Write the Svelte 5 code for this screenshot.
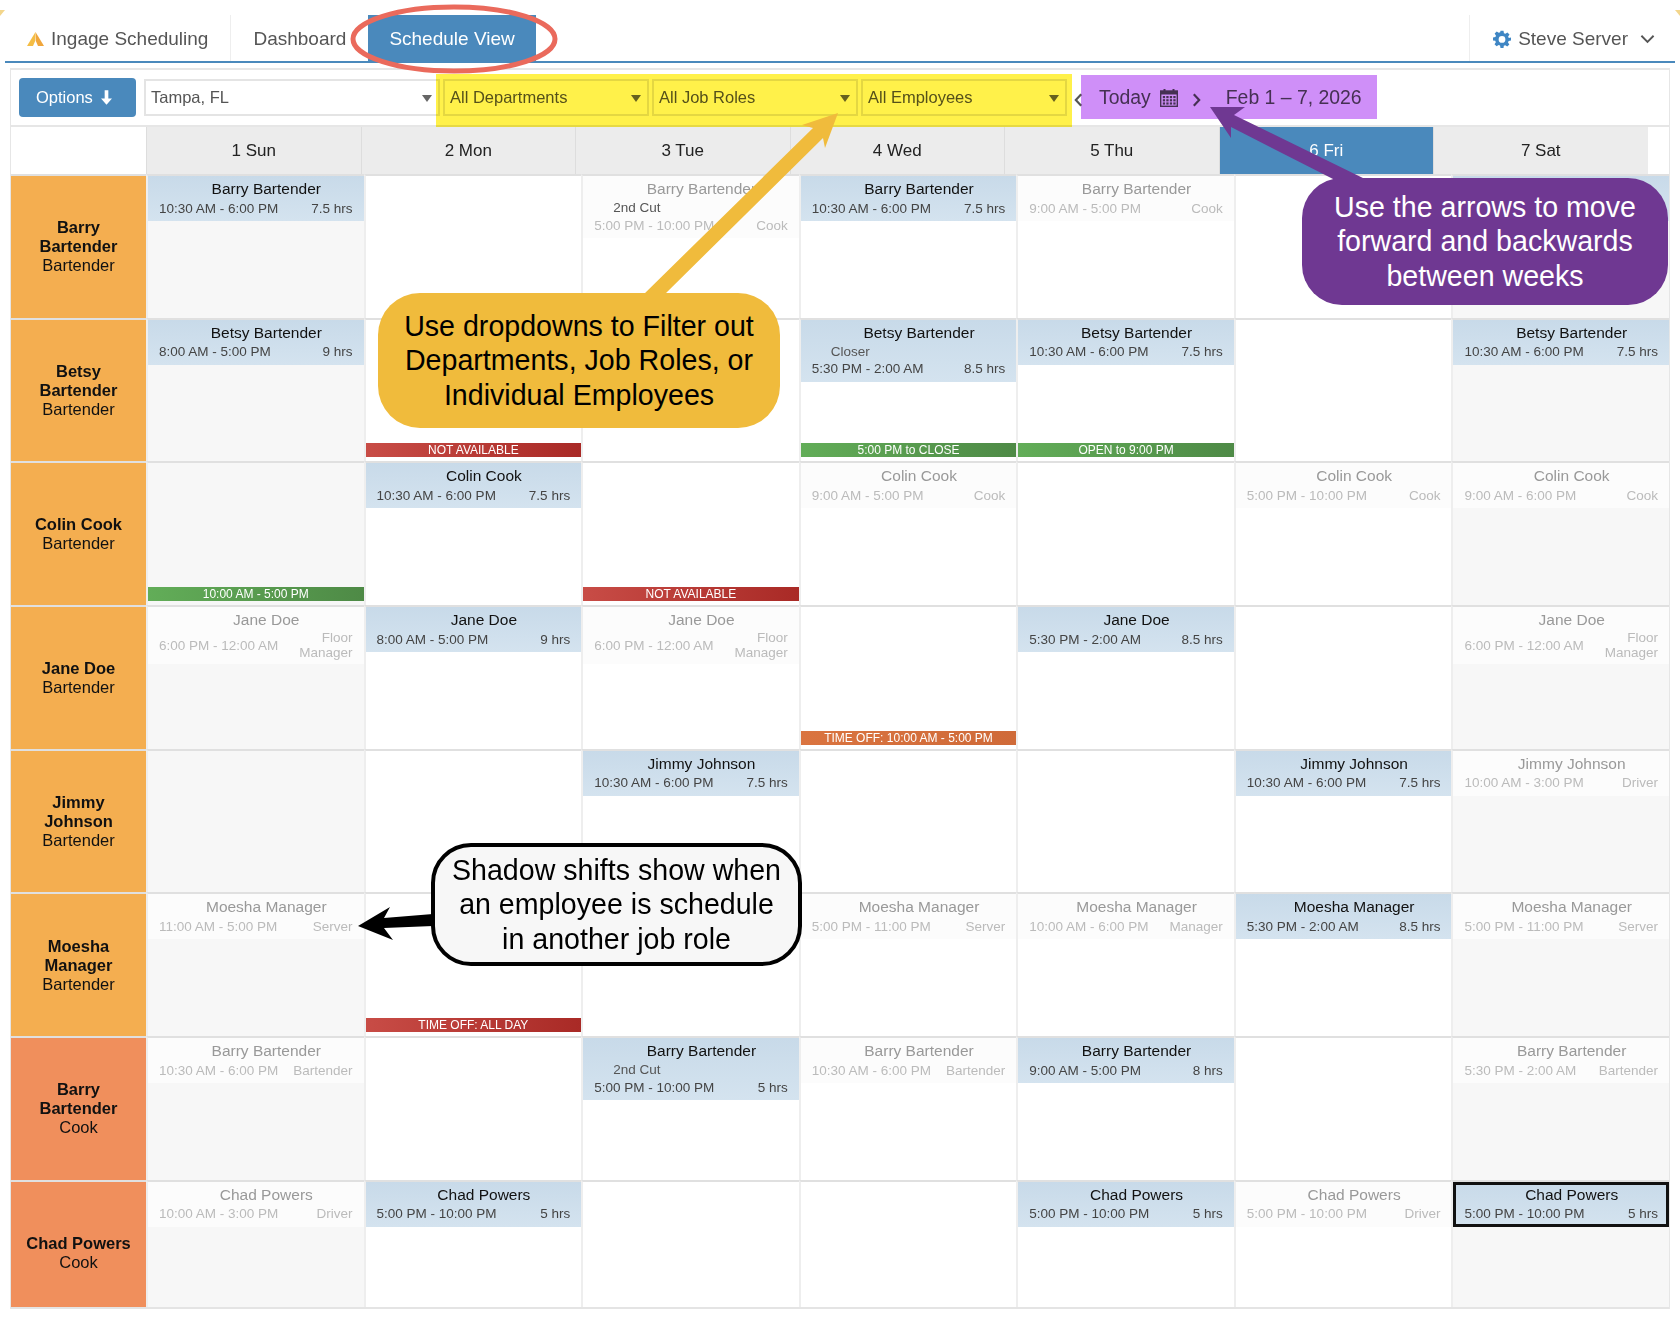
<script>
	const days = ['1 Sun', '2 Mon', '3 Tue', '4 Wed', '5 Thu', '6 Fri', '7 Sat'];

	const bar = 'Barry Bartender', bet = 'Betsy Bartender', col = 'Colin Cook', jan = 'Jane Doe';
	const jim = 'Jimmy Johnson', moe = 'Moesha Manager', cha = 'Chad Powers';
	const T1030 = '10:30 AM - 6:00 PM', T95 = '9:00 AM - 5:00 PM', T510 = '5:00 PM - 10:00 PM';
	const T530 = '5:30 PM - 2:00 AM', T85 = '8:00 AM - 5:00 PM', T612 = '6:00 PM - 12:00 AM';
	const T511 = '5:00 PM - 11:00 PM', T103 = '10:00 AM - 3:00 PM';

	const on = (name, time, right, extra = {}) => ({ kind: 'active', name, time, right, ...extra });
	const off = (name, time, right, extra = {}) => ({ kind: 'shadow', name, time, right, ...extra });
	const flag = (text, tone) => ({ flag: text, tone });

	const rows = [
		{ first: 'Barry Bartender', role: 'Bartender', tone: 'bar', cells: [
			on(bar, T1030, '7.5 hrs'), null, off(bar, T510, 'Cook', { sub: '2nd Cut' }), on(bar, T1030, '7.5 hrs'),
			// the saturday shift sits behind the purple note, only its top edge shows
			off(bar, T95, 'Cook'), null, { kind: 'active', blank: true }
		] },
		{ first: 'Betsy Bartender', role: 'Bartender', tone: 'bar', cells: [
			on(bet, T85, '9 hrs'), flag('NOT AVAILABLE', 'red'), null,
			on(bet, T530, '8.5 hrs', { sub: 'Closer', flag: '5:00 PM to CLOSE', tone: 'green' }),
			on(bet, T1030, '7.5 hrs', { flag: 'OPEN to 9:00 PM', tone: 'green' }), null, on(bet, T1030, '7.5 hrs')
		] },
		{ first: 'Colin Cook', role: 'Bartender', tone: 'bar', cells: [
			flag('10:00 AM - 5:00 PM', 'green'), on(col, T1030, '7.5 hrs'), flag('NOT AVAILABLE', 'red'),
			off(col, T95, 'Cook'), null, off(col, T510, 'Cook'), off(col, '9:00 AM - 6:00 PM', 'Cook')
		] },
		{ first: 'Jane Doe', role: 'Bartender', tone: 'bar', cells: [
			off(jan, T612, 'Floor Manager'), on(jan, T85, '9 hrs'), off(jan, T612, 'Floor Manager'),
			flag('TIME OFF: 10:00 AM - 5:00 PM', 'orange'), on(jan, T530, '8.5 hrs'), null, off(jan, T612, 'Floor Manager')
		] },
		{ first: 'Jimmy Johnson', role: 'Bartender', tone: 'bar', cells: [
			null, null, on(jim, T1030, '7.5 hrs'), null, null, on(jim, T1030, '7.5 hrs'), off(jim, T103, 'Driver')
		] },
		{ first: 'Moesha Manager', role: 'Bartender', tone: 'bar', cells: [
			off(moe, '11:00 AM - 5:00 PM', 'Server'), flag('TIME OFF: ALL DAY', 'red'), null, off(moe, T511, 'Server'),
			off(moe, '10:00 AM - 6:00 PM', 'Manager'), on(moe, T530, '8.5 hrs'), off(moe, T511, 'Server')
		] },
		{ first: 'Barry Bartender', role: 'Cook', tone: 'cook', cells: [
			off(bar, T1030, 'Bartender'), null, on(bar, T510, '5 hrs', { sub: '2nd Cut' }), off(bar, T1030, 'Bartender'),
			on(bar, T95, '8 hrs'), null, off(bar, T530, 'Bartender')
		] },
		{ first: 'Chad Powers', role: 'Cook', tone: 'cook', cells: [
			off(cha, T103, 'Driver'), on(cha, T510, '5 hrs'), null, null, on(cha, T510, '5 hrs'), off(cha, T510, 'Driver'),
			on(cha, T510, '5 hrs', { selected: true })
		] }
	];
</script>

<div class="page">
	<nav class="nav">
		<div class="brand">
			<svg class="logo" viewBox="0 0 17 14"><path d="M8.500 0 L17 14 L11 14 L8.800 9 Z" fill="#f0a63c" /><path d="M8.500 0 L8.200 9 L6 14 L0 14 Z" fill="#f4bd45" /></svg>
			<span>Ingage Scheduling</span>
		</div>
		<a class="tab">Dashboard</a>
		<a class="tab current">Schedule View</a>
		<div class="user">
			<svg class="gear" viewBox="0 0 24 24"><path fill="#3f86c4" fill-rule="evenodd" d="M10 1h4l.6 3.2 1.900.8 2.700-1.800 2.800 2.800-1.800 2.700.8 1.900L24 10v4l-3.200.6-.8 1.900 1.800 2.700-2.800 2.800-2.700-1.800-1.900.8L14 24h-4l-.6-3.200-1.900-.8-2.700 1.800-2.800-2.800 1.800-2.700-.8-1.900L0 14v-4l3.200-.6.8-1.900L2.200 4.800 5 2l2.700 1.800 1.900-.8zM12 8a4.500 4.500 0 1 0 0 9 4.500 4.500 0 0 0 0-9z" /></svg>
			<span>Steve Server</span>
			<svg class="chev" viewBox="0 0 16 10"><path d="M1.500 1.500 L8 8 L14.500 1.500" fill="none" stroke="#555" stroke-width="2" /></svg>
		</div>
	</nav>

	<section class="board">
		<div class="toolbar">
			<button class="options">Options
				<svg viewBox="0 0 12 16"><path d="M4 0h4v9h4l-6 7-6-7h4z" fill="#fff" /></svg>
			</button>
			<div class="select wide">Tampa, FL<i></i></div>
			<div class="select">All Departments<i></i></div>
			<div class="select">All Job Roles<i></i></div>
			<div class="select">All Employees<i></i></div>
			<div class="dates">
				<svg class="arrow" viewBox="0 0 10 16"><path d="M8 1.500 L2 8 L8 14.500" fill="none" stroke="#555" stroke-width="2.400" /></svg>
				<span class="today">Today</span>
				<svg class="cal" viewBox="0 0 18 18">
					<rect x="3.500" y="0" width="2" height="3.500" fill="#555" />
					<rect x="12.500" y="0" width="2" height="3.500" fill="#555" />
					<rect x="0.700" y="2" width="16.600" height="15.300" fill="none" stroke="#555" stroke-width="1.400" />
					<rect x="1" y="2" width="16" height="3.500" fill="#555" />
					{#each [7, 10.200, 13.400] as y}
						{#each [2.800, 6.300, 9.800, 13.300] as x}
							<rect {x} {y} width="2.300" height="2.200" fill="#555" />
						{/each}
					{/each}
				</svg>
				<svg class="arrow next" viewBox="0 0 10 16"><path d="M2 1.500 L8 8 L2 14.500" fill="none" stroke="#555" stroke-width="2.400" /></svg>
				<span class="range">Feb 1 – 7, 2026</span>
			</div>
		</div>

		<div class="head">
			<div class="corner"></div>
			{#each days as d, i}
				<div class="day" class:now={i === 5}>{d}</div>
			{/each}
		</div>

		<div class="grid">
			{#each rows as row}
				<div class="who {row.tone}">
					<b>{row.first}</b>
					<span>{row.role}</span>
				</div>
				{#each row.cells as c, i}
					<div class="cell" class:weekend={i === 0 || i === 6}>
						{#if c?.blank}
							<div class="shift active blank"></div>
						{:else if c?.kind}
							<div class="shift {c.kind}" class:selected={c.selected}>
								<div class="name">{c.name}</div>
								{#if c.sub}<div class="sub">{c.sub}</div>{/if}
								<div class="line">
									<span class="time">{c.time}</span>
									<span class="right">{c.right}</span>
								</div>
							</div>
						{/if}
						{#if c?.flag}
							<div class="flag {c.tone}">{c.flag}</div>
						{/if}
					</div>
				{/each}
			{/each}
		</div>
	</section>

	<!-- annotations drawn on top of the screenshot -->
	<div class="mark yellow"></div>
	<div class="mark purple"></div>
	<svg class="ink" viewBox="0 0 1680 1319">
		<polygon points="0,10 5,10 0,16" fill="#f3d68c" />
		<polygon points="1675,10 1680,10 1680,16" fill="#f3d68c" />
		<ellipse cx="454" cy="39" rx="101" ry="32" fill="none" stroke="#ea6a5c" stroke-width="5" />
		<polygon points="838,113 825,148 823,138 664,295 643,295 813,128 802,125" fill="#f0bb3c" />
		<polygon points="1210,107 1245,107 1234,115 1367,180 1335,180 1231,127 1231,138" fill="#6f3892" />
		<polygon points="358,926 390,907 384,918 433,914 433,926 384,928 393,940" fill="#000" />
	</svg>
	<div class="note gold">Use dropdowns to Filter out<br />Departments, Job Roles, or<br />Individual Employees</div>
	<div class="note violet">Use the arrows to move<br />forward and backwards<br />between weeks</div>
	<div class="note plain">Shadow shifts show when<br />an employee is schedule<br />in another job role</div>
</div>

<style>
	:global(body) {
		margin: 0;
		background: #fff;
	}

	.page {
		position: relative;
		width: 1680px;
		height: 1319px;
		overflow: hidden;
		font-family: "Liberation Sans", Arial, sans-serif;
		color: #333;
	}

	/* top nav */
	.nav {
		display: flex;
		align-items: stretch;
		height: 46px;
		margin: 15px 5px 0;
		border-bottom: 2px solid #4a89bc;
		font-size: 19px;
		color: #555;
	}

	.brand {
		display: flex;
		align-items: center;
		gap: 7px;
		padding: 2px 22px 0;
		border-right: 1px solid #eee;
	}

	.logo {
		width: 17px;
		height: 14px;
	}

	.tab {
		display: flex;
		align-items: center;
		padding: 2px 0 0 22px;
		margin-right: 22px;
	}

	.tab.current {
		padding: 2px 21px 0;
		margin: 0;
		background: #4a89bc;
		color: #fff;
	}

	.user {
		display: flex;
		align-items: center;
		gap: 7px;
		margin-left: auto;
		padding: 2px 20px 0 23px;
		border-left: 1px solid #eee;
	}

	.gear {
		width: 18px;
		height: 18px;
	}

	.chev {
		width: 15px;
		height: 10px;
		margin-left: 5px;
	}

	/* toolbar */
	.board {
		margin: 5px 10px 0;
		border: 1px solid #e6e6e6;
		border-top-width: 2px;
		border-bottom: 0;
	}

	.toolbar {
		display: flex;
		align-items: center;
		gap: 3px;
		height: 55px;
		padding-left: 8px;
		box-sizing: border-box;
	}

	.options {
		display: flex;
		align-items: center;
		gap: 8px;
		width: 117px;
		height: 39px;
		margin-right: 5px;
		padding: 0 0 0 17px;
		border: 0;
		border-radius: 4px;
		background: #4a89bc;
		color: #fff;
		font: 16.500px "Liberation Sans", Arial, sans-serif;
	}

	.options svg {
		width: 11px;
		height: 15px;
	}

	.select {
		position: relative;
		width: 206px;
		height: 37px;
		padding-left: 5px;
		box-sizing: border-box;
		border: 2px solid #e4e4e4;
		font-size: 16.500px;
		line-height: 33px;
		color: #555;
	}

	.select.wide {
		width: 296px;
	}

	.select i {
		position: absolute;
		right: 6px;
		top: 14px;
		border: 5px solid transparent;
		border-top: 7px solid #666;
		border-bottom: 0;
	}

	.dates {
		display: flex;
		align-items: center;
		margin-left: 4px;
		font-size: 19.400px;
		color: #555;
	}

	.arrow {
		width: 9px;
		height: 16px;
		margin-top: 4px;
	}

	.arrow.next {
		margin: 4px 25px 0 14px;
	}

	.today {
		margin-left: 16px;
	}

	.cal {
		width: 18px;
		height: 18px;
		margin-left: 9px;
		margin-top: 1px;
	}

	/* calendar */
	.head {
		display: grid;
		grid-template-columns: 135px repeat(7, 214.500px) 1fr;
		height: 49px;
		border-top: 2px solid #e6e6e6;
		box-sizing: border-box;
	}

	.day {
		display: flex;
		align-items: center;
		justify-content: center;
		background: #ececec;
		border-left: 1px solid #ddd;
		font-size: 17px;
		color: #222;
	}

	.day.now {
		background: #4a89bc;
		color: #fff;
	}

	/* last row runs past the bottom of the view and is cut off */
	.grid {
		display: grid;
		grid-template-columns: 135px repeat(7, 1fr);
		grid-auto-rows: 143.700px;
		height: 1135px;
		box-sizing: border-box;
		overflow: hidden;
		border-bottom: 2px solid #e4e4e4;
	}

	.who {
		display: flex;
		flex-direction: column;
		align-items: center;
		justify-content: center;
		padding: 0 14px;
		border-top: 2px solid #e0e0e0;
		font-size: 16.500px;
		line-height: 19px;
		text-align: center;
		color: #111;
	}

	.who.bar {
		background: #f4ae50;
	}

	.who.cook {
		background: #f08f5c;
	}

	.cell {
		position: relative;
		min-width: 0;
		border-top: 2px solid #e0e0e0;
		border-left: 2px solid #eee;
		box-sizing: border-box;
	}

	.cell.weekend {
		background: #f7f7f7;
	}

	.shift {
		padding: 2px 11px 4px;
	}

	.shift.blank {
		height: 45px;
		padding: 0;
	}

	.shift.active {
		background: linear-gradient(#c8dae9, #d4e3ef);
		color: #111;
	}

	.shift.shadow {
		background: #fcfcfc;
		color: #999;
	}

	.shift.selected {
		outline: 3px solid #111;
		outline-offset: -3px;
	}

	.name {
		padding-left: 21px;
		font-size: 15.500px;
		line-height: 21px;
		text-align: center;
	}

	.sub {
		padding-left: 19px;
		font-size: 13.500px;
		line-height: 17px;
		color: #555;
	}

	.line {
		display: flex;
		align-items: center;
		justify-content: space-between;
		min-height: 18px;
		font-size: 13.500px;
		line-height: 15px;
	}

	.active .time,
	.active .right {
		color: #444;
	}

	.shadow .time,
	.shadow .right {
		color: #bbb;
	}

	.right {
		max-width: 60px;
		text-align: right;
	}

	.flag {
		position: absolute;
		left: 0;
		right: 0;
		bottom: 4px;
		height: 14px;
		font-size: 12px;
		line-height: 14px;
		text-align: center;
		color: #fff;
	}

	.flag.red {
		background: linear-gradient(90deg, #c84c46, #a92a26);
	}

	.flag.green {
		background: linear-gradient(90deg, #62ad58, #4e8a46);
	}

	.flag.orange {
		background: linear-gradient(90deg, #da7440, #cf6a38);
	}

	/* annotations */
	.mark {
		position: absolute;
		mix-blend-mode: multiply;
	}

	.mark.yellow {
		left: 436px;
		top: 74px;
		width: 636px;
		height: 53px;
		background: #fff14a;
	}

	.mark.purple {
		left: 1081px;
		top: 75px;
		width: 296px;
		height: 44px;
		background: #cf8ff8;
	}

	.ink {
		position: absolute;
		inset: 0;
		width: 1680px;
		height: 1319px;
	}

	.note {
		position: absolute;
		display: flex;
		align-items: center;
		justify-content: center;
		box-sizing: border-box;
		font-size: 28.600px;
		line-height: 34.500px;
		text-align: center;
		color: #000;
	}

	.note.gold {
		left: 378px;
		top: 293px;
		width: 402px;
		height: 135px;
		border-radius: 42px;
		background: #f0bb3c;
	}

	.note.violet {
		left: 1302px;
		top: 178px;
		width: 366px;
		height: 127px;
		border-radius: 40px;
		background: #6f3892;
		color: #fff;
	}

	.note.plain {
		left: 431px;
		top: 843px;
		width: 371px;
		height: 123px;
		border: 4px solid #000;
		border-radius: 40px;
		background: #f7f7f7;
	}
</style>
